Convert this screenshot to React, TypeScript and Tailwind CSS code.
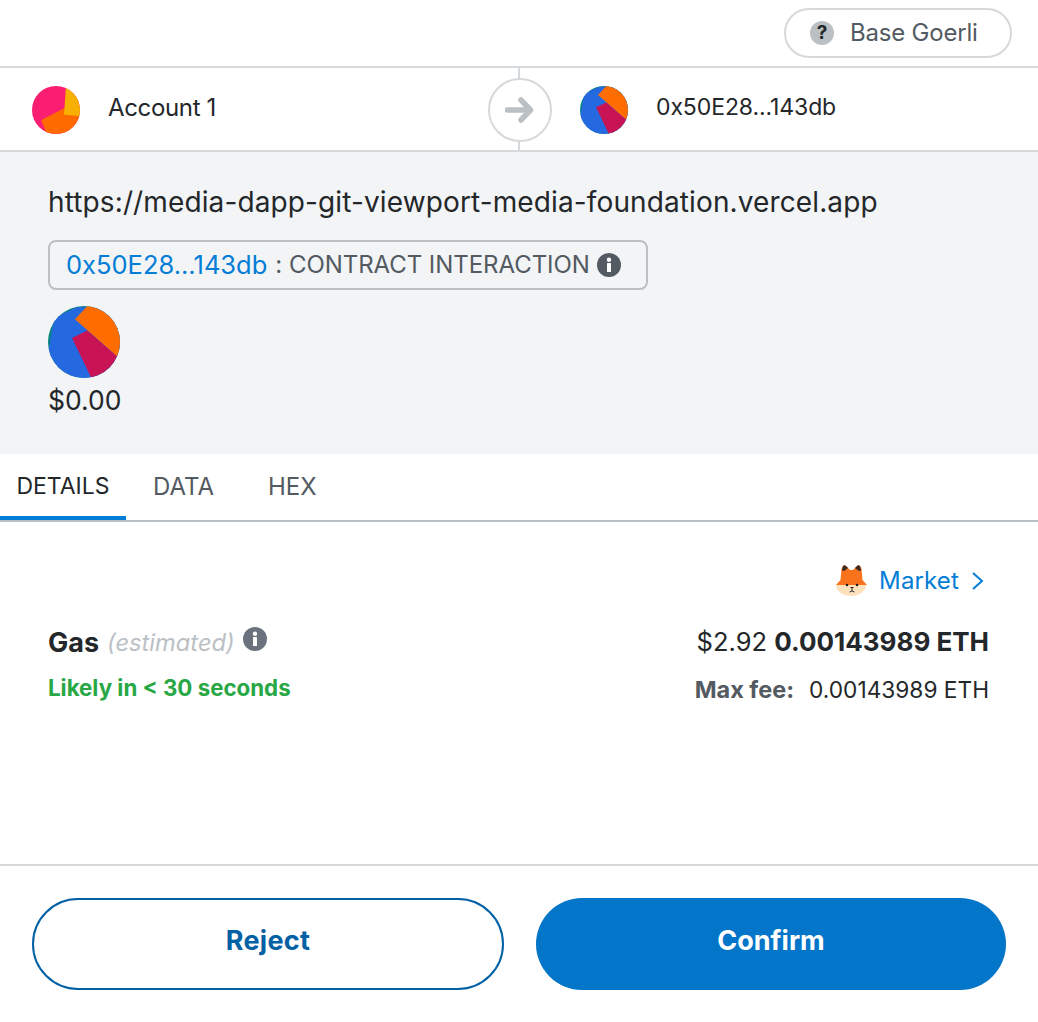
const InfoIcon = ({ className }: { className: string }) => (
  <svg viewBox="0 0 24 24" className={className}>
    <circle cx="12" cy="12" r="12" fill="currentColor" />
    <rect x="10" y="10" width="4" height="9" rx="0.6" fill="white" />
    <circle cx="12" cy="6.8" r="2.2" fill="white" />
  </svg>
);

const AccountAvatar = () => (
  <svg viewBox="0 0 48 48" className="h-12 w-12 shrink-0">
    <defs>
      <clipPath id="account-clip">
        <circle cx="24" cy="24" r="24" />
      </clipPath>
    </defs>
    <g clipPath="url(#account-clip)">
      <rect width="48" height="48" fill="#f91e72" />
      <polygon points="32,22.3 9.3,34 14.7,48 48,48 48,30" fill="#ff6a00" />
      <polygon points="34,0 32,28.7 48,30 48,0" fill="#f7b000" />
    </g>
  </svg>
);

const ContractAvatar = ({ id, className }: { id: string; className: string }) => (
  <svg viewBox="0 0 48 48" className={className}>
    <defs>
      <clipPath id={id}>
        <circle cx="24" cy="24" r="24" />
      </clipPath>
    </defs>
    <g clipPath={`url(#${id})`}>
      <rect width="48" height="48" fill="#03847c" />
      <polygon points="0.5,29 4,8 19,0.8 48,0 48,48 0,48" fill="#2469e0" />
      <polygon points="26.2,0 18,8.9 46.2,33.8 54,33.8 54,0" fill="#ff6d00" />
      <polygon points="26.2,16.4 16,21.3 28.9,48 54,48 54,32 46.2,33.8" fill="#c81454" />
    </g>
  </svg>
);

const FoxIcon = () => (
  <svg viewBox="0 0 42 42" className="h-[42px] w-[42px] shrink-0">
    <path d="M6 25 H36 A15 11 0 0 1 6 25 Z" fill="#fde2bd" />
    <path d="M6 25 L10.5 20 L11.5 9 Q13 3.5 16 6 L20 10 H23 L27 6 Q30 3.5 31.5 9 L32.5 20 L37 25 Z" fill="#f9731c" />
    <path d="M12 10.5 Q13 3.5 16 6 L18 8 L14 11 Z M31 10.5 Q30 3.5 27 6 L25 8 L29 11 Z" fill="#3a2a25" />
    <circle cx="17" cy="25" r="1.3" fill="#222" />
    <circle cx="27" cy="25" r="1.3" fill="#222" />
    <path d="M20 27 H24 L22 29 Z" fill="#222" />
    <path d="M22 29 V31 M22 31 L19.5 32 M22 31 L24.5 32" stroke="#222" strokeWidth="0.9" fill="none" />
  </svg>
);

export default function App() {
  return (
    <div className="flex h-[1022px] w-[1038px] flex-col bg-white font-['Inter',sans-serif] text-[#24272a]">
      {/* network pill */}
      <div className="flex h-[66px] items-center justify-end pr-[26px]">
        <div className="flex h-[50px] w-[228px] items-center gap-[16px] rounded-full border-2 border-[#d6d9dc] pl-[24px] text-[24px] tracking-[-0.2px] text-[#535a61]">
          <span className="flex h-6 w-6 items-center justify-center rounded-full bg-[#bbc0c5] text-[19px] font-bold text-[#24272a]">?</span>
          <span>Base Goerli</span>
        </div>
      </div>

      {/* sender to recipient */}
      <div className="relative flex h-[86px] items-center border-y-2 border-[#d6d9dc] pt-[2px]">
        <div className="flex w-[548px] items-center gap-[28px] pl-[32px]">
          <AccountAvatar />
          <span className="mb-[5px] text-[24px] tracking-[-0.35px]">Account 1</span>
        </div>
        <div className="flex items-center gap-[28px] pl-[32px]">
          <ContractAvatar id="recipient-clip" className="h-12 w-12 shrink-0" />
          <span className="mb-[5px] text-[23px] tracking-[-0.1px]">0x50E28...143db</span>
        </div>
        <div className="absolute top-0 bottom-0 left-[518px] w-[2px] bg-[#d6d9dc]" />
        <div className="absolute top-[10px] left-[488px] flex h-[64px] w-[64px] items-center justify-center rounded-full border-2 border-[#d6d9dc] bg-white">
          <svg viewBox="0 0 30 30" className="h-[30px] w-[30px]" fill="none" stroke="#bbc0c5" strokeWidth="5.5" strokeLinecap="round" strokeLinejoin="round">
            <path d="M2.5 15 H25 M16 5 L25.5 15 L16 25" />
          </svg>
        </div>
      </div>

      {/* summary */}
      <div className="flex h-[302px] flex-col items-start bg-[#f2f4f6] px-[48px] pt-[32px]">
        <div className="text-[28px] leading-[36px] tracking-[0.12px]">https://media-dapp-git-viewport-media-foundation.vercel.app</div>
        <div className="mt-[20px] flex h-[50px] w-[600px] items-center rounded-lg border-2 border-[#bbc0c5] pl-[16px] text-[24px]">
          <span className="text-[25.5px] text-[#037dd6]">0x50E28...143db</span>
          <span className="ml-[8px] tracking-[-0.05px] text-[#535a61]">: CONTRACT INTERACTION</span>
          <InfoIcon className="ml-[7px] h-6 w-6 text-[#535a61]" />
        </div>
        <ContractAvatar id="contract-clip" className="mt-[16px] h-[72px] w-[72px]" />
        <div className="mt-[4px] text-[26.5px] leading-[36px]">$0.00</div>
      </div>

      {/* tabs */}
      <div className="flex h-[68px] items-stretch border-b-2 border-[#bbc0c5] pt-[2px] text-[24px] text-[#535a61]">
        <div className="flex w-[126px] items-center justify-center border-b-4 border-[#037dd6] text-[23px] text-[#24272a]">DETAILS</div>
        <div className="ml-[27px] flex items-center pb-[3px]">DATA</div>
        <div className="ml-[54px] flex items-center pb-[3px]">HEX</div>
      </div>

      {/* gas */}
      <div className="flex flex-1 flex-col px-[48px] pt-[38px]">
        <div className="flex items-center justify-end text-[24px] text-[#037dd6]">
          <FoxIcon />
          <span className="ml-[7px] tracking-[0.15px]">Market</span>
          <svg viewBox="0 0 14 20" className="ml-[12px] mr-[5px] h-5 w-[14px]" fill="none" stroke="#037dd6" strokeWidth="2">
            <path d="M2 2 L11 10 L2 18" />
          </svg>
        </div>
        <div className="mt-[21px] flex justify-between">
          <div>
            <div className="flex items-center gap-[8px]">
              <span className="text-[27px] leading-[39px] font-bold">Gas</span>
              <span className="text-[23.7px] italic text-[#bbc0c5]">(estimated)</span>
              <InfoIcon className="-mt-[8px] h-6 w-6 text-[#6a737d]" />
            </div>
            <div className="mt-[9px] text-[22.3px] leading-[33px] font-bold text-[#28a745]">Likely in &lt; 30 seconds</div>
          </div>
          <div className="-mt-[1px] pr-[1px] text-right">
            <div className="text-[25.5px] leading-[39px]">
              $2.92 <span className="text-[26px] font-bold">0.00143989 ETH</span>
            </div>
            <div className="mt-[12px] text-[22.7px] leading-[33px]">
              <span className="mr-[15px] text-[23.5px] font-bold text-[#535a61]">Max fee:</span>0.00143989 ETH
            </div>
          </div>
        </div>
      </div>

      {/* footer */}
      <div className="flex h-[158px] gap-[32px] border-t-2 border-[#d6d9dc] pt-[32px] pr-[32px] pl-[32px] text-[27px] font-bold">
        <button className="h-[92px] w-[472px] rounded-full border-2 border-[#0260a4] pb-[6px] tracking-[0.3px] text-[#0260a4]">Reject</button>
        <button className="h-[92px] w-[470px] rounded-full bg-[#0376c9] pb-[6px] text-white">Confirm</button>
      </div>
    </div>
  );
}
